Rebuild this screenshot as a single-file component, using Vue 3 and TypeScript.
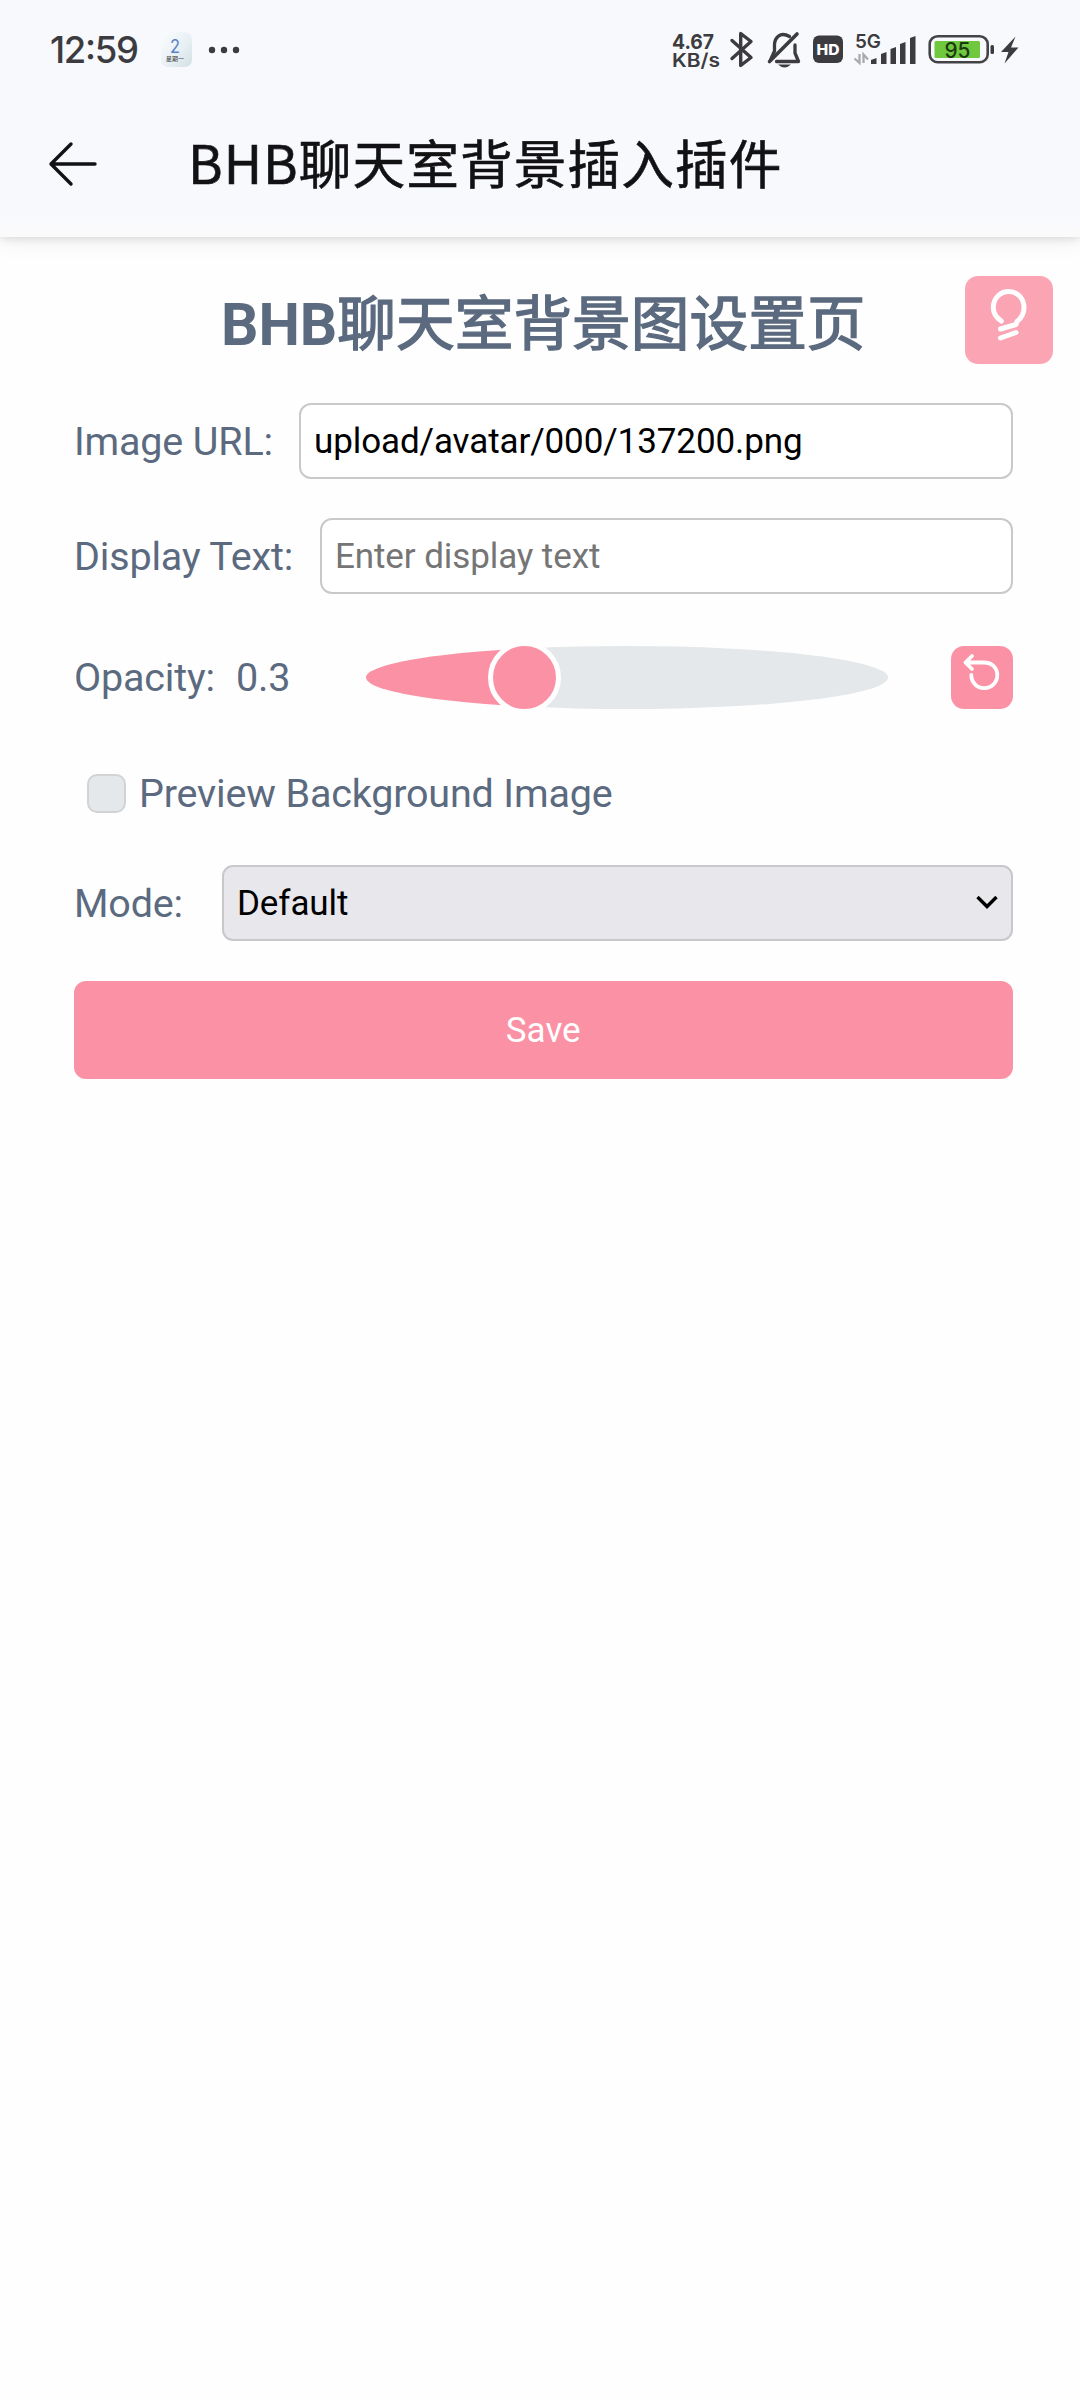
<script setup lang="ts">
import { computed, ref } from 'vue'

const imageUrl = ref('upload/avatar/000/137200.png')
const displayText = ref('')
const opacity = ref(0.3)
const preview = ref(false)
const mode = ref('Default')

const trackWidth = 522
const thumbWidth = 73
const thumbLeft = computed(() => opacity.value * (trackWidth - thumbWidth) - 13)
const fill = computed(() => thumbLeft.value + thumbWidth / 2)

const signalBars = [
  { x: 871, h: 6 },
  { x: 881, h: 12 },
  { x: 890.5, h: 17 },
  { x: 900, h: 22 },
  { x: 910, h: 28 },
]
</script>

<template>
  <div class="screen">
    <header class="top">
      <svg class="status" width="1080" height="100" viewBox="0 0 1080 100">
        <defs>
          <linearGradient id="cal" x1="0" y1="0" x2="1" y2="1">
            <stop offset="0" stop-color="#fbfdfe" />
            <stop offset="0.6" stop-color="#e6eff3" />
            <stop offset="1" stop-color="#d3e0e4" />
          </linearGradient>
        </defs>
        <text class="inter" x="50" y="63" font-size="36.500" font-weight="500" textLength="89">12:59</text>
        <rect x="161" y="32" width="31" height="35" rx="7" fill="url(#cal)" />
        <text class="inter blue" x="170" y="52.500" font-size="18" textLength="10" lengthAdjust="spacingAndGlyphs">2</text>
        <text class="cjk" x="166" y="61" font-size="6" textLength="18">星期一</text>
        <circle cx="212" cy="50" r="3.200" /><circle cx="224" cy="50" r="3.200" /><circle cx="236" cy="50" r="3.200" />

        <text class="inter" x="672" y="49" font-size="20.500" font-weight="700" textLength="42" lengthAdjust="spacingAndGlyphs">4.67</text>
        <text class="inter" x="672" y="67" font-size="19" font-weight="600" textLength="48" lengthAdjust="spacingAndGlyphs">KB/s</text>
        <path d="M732 40.500 L751 57.500 L740.700 65.500 V33.500 L751 41.500 L732 58.500" class="line" stroke-width="3.400" />
        <g>
          <path d="M789.500 36.500 C780 31 774.500 38 774.500 45 V51 L770.500 60" class="line" stroke-width="3.300" />
          <path d="M776.500 61.500 H798.500 L795 53 V45" class="line" stroke-width="3.300" />
          <path d="M797 34 L769.500 61.500" class="line" stroke-width="3.600" />
          <path d="M778 64.500 H791 Q784.500 70.500 778 64.500Z" />
        </g>
        <rect x="813" y="35.500" width="30" height="27.500" rx="6" />
        <text class="inter white" x="816.500" y="55" font-size="14.500" font-weight="800" textLength="23" lengthAdjust="spacingAndGlyphs">HD</text>
        <text class="inter" x="855" y="47.500" font-size="19" font-weight="600" textLength="26" lengthAdjust="spacingAndGlyphs">5G</text>
        <g stroke="#aaaaad" stroke-width="2.300" fill="none">
          <path d="M859.500 54 V63 L854.500 58.500 M863.500 63 V54.500 L868 59.500" />
        </g>
        <path v-for="b in signalBars" :key="b.x" :d="`M${b.x} ${64 - b.h + 2} l5.500 -2 V64 h-5.500Z`" />
        <rect x="929.700" y="36.200" width="58" height="26" rx="8" fill="none" stroke="#444448" stroke-width="2.600" />
        <rect x="934.500" y="41" width="45.500" height="17" rx="1.500" fill="#70c83e" />
        <text class="inter charge" x="944.500" y="57.500" font-size="21" font-weight="500" textLength="26" lengthAdjust="spacingAndGlyphs">95</text>
        <rect x="990.500" y="45" width="3.500" height="9" rx="1.500" />
        <path d="M1015.500 36.500 L1001 52 H1008.500 L1004.500 63.500 L1018.500 47.500 H1011Z" />
      </svg>
      <div class="bar">
        <svg class="back" width="50" height="46" viewBox="0 0 50 46">
          <path d="M47 23 H3 M23 3 L3 23 L23 43" fill="none" stroke="#121214" stroke-width="3.400" stroke-linecap="round" stroke-linejoin="round" />
        </svg>
        <span class="title">BHB聊天室背景插入插件</span>
      </div>
    </header>

    <main class="page">
      <button class="tip" type="button">
        <svg width="88" height="88" viewBox="0 0 88 88" fill="none" stroke="#fff" stroke-width="5" stroke-linecap="round" stroke-linejoin="round">
          <path d="M36.300 45 C31 41.500 28.300 37 28.300 31.500 C28.300 22.500 35 15.500 43.700 15.500 C52.500 15.500 59 22.500 59 31.500 C59 37.500 56.500 42 52 45.500 L51 48.500 L35.500 53" />
          <path d="M35.500 62 L51 56.500" />
        </svg>
      </button>
      <h1>BHB<span>聊天室背景图设置页</span></h1>

      <div class="row url">
        <label class="l1">Image URL:</label>
        <input v-model="imageUrl" type="text" />
      </div>
      <div class="row">
        <label class="l2">Display Text:</label>
        <input v-model="displayText" type="text" placeholder="Enter display text" />
      </div>
      <div class="row opacity">
        <label class="l3">Opacity:</label>
        <span class="value">{{ opacity }}</span>
        <div class="slider" :style="{ '--fill': fill + 'px' }">
          <div class="thumb" :style="{ left: thumbLeft + 'px' }"></div>
        </div>
        <button class="reset" type="button">
          <svg width="62" height="63" viewBox="0 0 62 63" fill="none" stroke="#fff" stroke-width="3.800" stroke-linecap="round" stroke-linejoin="round">
            <path d="M21 10 L14.500 16.500 L21 23 M14.500 16.500 H33 C41 16.500 46.300 22 46.300 29 C46.300 36.500 40.500 42.200 33 42.200 C26 42.200 20.300 36.500 20.300 29" />
          </svg>
        </button>
      </div>
      <div class="row check" @click="preview = !preview">
        <span class="box" :class="{ on: preview }"></span>
        <label>Preview Background Image</label>
      </div>
      <div class="row mode">
        <label class="l4">Mode:</label>
        <div class="select">
          <span>{{ mode }}</span>
          <svg width="22" height="14" viewBox="0 0 22 14">
            <path d="M1.500 1 L11 10.500 L20.500 1" fill="none" stroke="#000" stroke-width="3.400" />
          </svg>
        </div>
      </div>
      <button class="save" type="button">Save</button>
    </main>
  </div>
</template>

<style>
html,
body {
  background: #fefefe;
}
</style>

<style scoped>
.screen {
  width: 1080px;
  height: 2400px;
  overflow: hidden;
  background: #fefefe;
  font-family: Roboto, 'Noto Sans CJK SC', sans-serif;
  color: #5b6a7f;
}
.top {
  height: 237px;
  position: relative;
  background: linear-gradient(#f8f9fc 220px, #fafafa 232px);
  box-shadow: 0 2px 8px rgba(0, 0, 0, 0.1), 0 4px 22px rgba(0, 0, 0, 0.07);
}
.status {
  display: block;
  fill: #3c3c40;
}
.inter {
  font-family: Inter, sans-serif;
}
.blue {
  fill: #5a82c8;
}
.white {
  fill: #fff;
}
.charge {
  fill: #1c3a10;
}
.cjk {
  font-family: 'Noto Sans CJK SC', sans-serif;
}
.line {
  fill: none;
  stroke: #3c3c40;
  stroke-linecap: round;
  stroke-linejoin: round;
}
.bar {
  display: flex;
  align-items: center;
  height: 128px;
  padding-left: 48px;
}
.back {
  display: block;
  margin-right: 90px;
}
.title {
  font-family: 'Noto Sans CJK SC', sans-serif;
  font-size: 52.7px;
  line-height: 60px;
  letter-spacing: 1.05px;
  padding-bottom: 7px;
  color: #121214;
  -webkit-text-stroke: 0.6px #121214;
  white-space: nowrap;
}
.page {
  position: relative;
  padding: 39px 67.5px 0 74px;
}
button {
  border: 0;
  padding: 0;
  font-family: inherit;
}
.tip {
  position: absolute;
  top: 39px;
  right: 27px;
  width: 88px;
  height: 88px;
  border-radius: 13px;
  background: #fba5b4;
}
.tip svg,
.reset svg {
  display: block;
}
h1 {
  margin: 11px 0 0;
  height: 76px;
  line-height: 76px;
  font-size: 58.7px;
  font-weight: 700;
  text-align: center;
  white-space: nowrap;
}
h1 span {
  font-weight: 400;
  -webkit-text-stroke: 1.4px #5b6a7f;
}
.row {
  display: flex;
  align-items: center;
  height: 76px;
  margin-top: 39px;
  font-size: 39.5px;
  letter-spacing: -0.17px;
}
.row.url {
  margin-top: 40px;
}
label,
.value {
  display: block;
  flex: none;
  white-space: nowrap;
}
.l1 {
  width: 225px;
}
.l2 {
  width: 246px;
}
.l3 {
  width: 162px;
}
.l4 {
  width: 148px;
}
.value {
  width: 130px;
}
input {
  box-sizing: border-box;
  flex: 1;
  min-width: 0;
  height: 76px;
  padding: 0 13px;
  border: 2px solid #c9c9cb;
  border-radius: 12px;
  outline: 0;
  background: #fff;
  font-family: inherit;
  font-size: 35px;
  letter-spacing: -0.1px;
  color: #000;
}
input::placeholder {
  color: #757575;
  opacity: 1;
}
.row.opacity {
  height: 64px;
  margin-top: 51px;
}
.slider {
  position: relative;
  width: 522px;
  height: 63px;
  border-radius: 50%;
  background: linear-gradient(to right, #fb91a5 var(--fill), #e4e8ea var(--fill));
}
.thumb {
  position: absolute;
  box-sizing: border-box;
  top: -5px;
  width: 73px;
  height: 73px;
  border: 5px solid #fefefe;
  border-radius: 50%;
  background: #fb91a5;
}
.reset {
  width: 62px;
  height: 63px;
  margin-left: auto;
  border-radius: 13px;
  background: #fb91a5;
}
.row.check {
  height: 64px;
  margin-top: 52px;
}
.row.mode {
  margin-top: 40px;
}
.box {
  box-sizing: border-box;
  width: 39px;
  height: 39px;
  margin: 0 13px 0 13px;
  border: 2px solid #d2d3d5;
  border-radius: 10px;
  background: #e4e8ea;
}
.box.on {
  background: #fb91a5;
}
.select {
  box-sizing: border-box;
  flex: 1;
  display: flex;
  align-items: center;
  justify-content: space-between;
  height: 76px;
  padding: 0 13px;
  border: 2px solid #c8c8cc;
  border-radius: 11px;
  background: #e8e7ec;
  font-size: 35px;
  letter-spacing: -0.1px;
  color: #000;
}
.save {
  display: block;
  width: 100%;
  height: 98px;
  margin-top: 40px;
  border-radius: 12px;
  background: #fb91a5;
  color: #fff;
  font-size: 35px;
}
</style>
